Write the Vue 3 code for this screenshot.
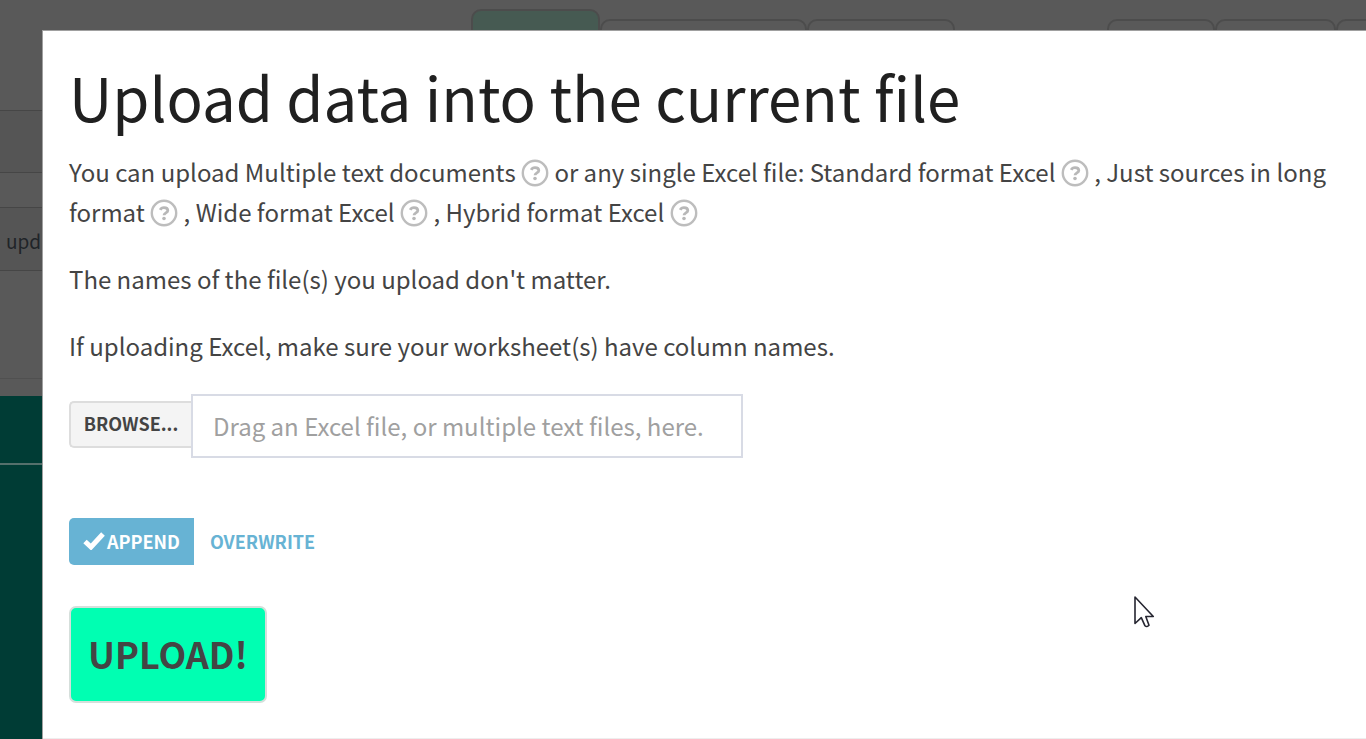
<script setup>
import { ref } from 'vue'

const mode = ref('append')
const fileName = ref('')

const intro = [
  { text: 'You can upload Multiple text documents', tail: 'or any single Excel file: ' },
  { text: 'Standard format Excel', tail: ', ' },
  { text: 'Just sources in long format', tail: ', ' },
  { text: 'Wide format Excel', tail: ', ' },
  { text: 'Hybrid format Excel', tail: '' },
]
</script>

<template>
  <div class="page">
    <div class="tabs">
      <div class="tab active"></div>
      <div class="tab wide"></div>
      <div class="tab medium"></div>
      <div class="gap"></div>
      <div class="tab narrow"></div>
      <div class="tab small"></div>
      <div class="tab rest"></div>
    </div>
    <div class="band head"></div>
    <div class="band shade"></div>
    <div class="band thin"></div>
    <div class="band row">upd</div>
    <div class="band open"></div>
    <div class="band strip"></div>
    <div class="band teal"></div>
    <div class="band teal last"></div>

    <main class="modal" role="dialog" aria-labelledby="title">
      <h1 id="title">Upload data into the current file</h1>
      <p>
        <template v-for="item in intro" :key="item.text">{{ item.text }} <svg class="help" viewBox="0 0 28 28" role="img" aria-label="Help"><circle cx="14" cy="14" r="12.2" fill="none" stroke="#bdbdbd" stroke-width="2.4" /><path d="M10.2 10.8C11 9.2 12.3 8.6 14 8.6C16.5 8.6 17.8 9.8 17.8 11.5C17.8 14 14 13.8 14 16.3" fill="none" stroke="#b8b8b8" stroke-width="2.8" /><circle cx="14" cy="19.5" r="1.8" fill="#b8b8b8" /></svg> {{ item.tail }}</template>
      </p>
      <p>The names of the file(s) you upload don't matter.</p>
      <p>If uploading Excel, make sure your worksheet(s) have column names.</p>

      <div class="picker">
        <button type="button" class="browse">BROWSE...</button>
        <input v-model="fileName" type="text" aria-label="File" placeholder="Drag an Excel file, or multiple text files, here." />
      </div>

      <div class="modes">
        <button type="button" class="mode chosen" :aria-pressed="mode === 'append'" @click="mode = 'append'">
          <svg class="check" viewBox="0 0 22 18" aria-hidden="true"><path d="M2 9.5L8 15L20 2" fill="none" stroke="currentColor" stroke-width="5" /></svg>APPEND
        </button>
        <button type="button" class="mode" :aria-pressed="mode === 'overwrite'" @click="mode = 'overwrite'">OVERWRITE</button>
      </div>

      <button type="button" class="upload">UPLOAD!</button>
      <div class="rule"></div>
    </main>

    <svg class="cursor" viewBox="0 0 22 34" aria-hidden="true">
      <path d="M2 2V28.5L8.3 22.7L12 30.8Q13.8 32.6 16 30.2L12.8 21.5H20.3Z" fill="#fff" stroke="#252530" stroke-width="1.6" stroke-linejoin="round" />
    </svg>
  </div>
</template>

<style>
body {
  margin: 0;
  background: #595959;
}
</style>

<style scoped>
* {
  box-sizing: border-box;
}
.page {
  position: relative;
  display: flex;
  flex-direction: column;
  min-height: 100vh;
  overflow: hidden;
  background: #595959;
  font-family: "Noto Sans CJK SC", "Noto Sans", sans-serif;
  color: #444;
}
.tabs {
  display: flex;
  align-items: flex-end;
  height: 40px;
  padding-left: 471px;
}
.tab {
  height: 21px;
  border: 2px solid #4c4c4c;
  border-radius: 10px 10px 0 0;
}
.tab.active {
  width: 129px;
  height: 31px;
  background: #465a52;
}
.tab.wide { width: 207px; }
.tab.medium { width: 148px; }
.gap { width: 152px; }
.tab.narrow { width: 108px; }
.tab.small { width: 121px; }
.tab.rest { flex: 1; border-right: 0; border-top-right-radius: 0; }
.band {
  border-bottom: 1px solid #464646;
}
.head { height: 71px; }
.shade { height: 62px; background: #555; }
.thin { height: 35px; }
.row {
  height: 63px;
  padding-left: 6px;
  background: #555;
  color: #202428;
  font-size: 19px;
  line-height: 66px;
}
.open { height: 108px; border-color: #505050; }
.strip { height: 17px; border: 0; }
.teal { height: 69px; border-bottom: 2px solid #55706c; background: #003c35; }
.last { flex: 1; border: 0; }
.modal {
  position: absolute;
  top: 30px;
  right: 0;
  left: 42px;
  min-height: calc(100% - 30px);
  padding: 20px 26px 0;
  border-top: 1px solid #a0a0a0;
  border-left: 1px solid #a0a0a0;
  background: #fff;
}
h1 {
  margin: 0 0 11px;
  color: #202020;
  font-size: 60px;
  font-weight: 400;
  line-height: 90px;
}
p {
  margin: 0 0 27px;
  font-size: 24px;
  line-height: 40px;
}
.help {
  width: 28px;
  height: 28px;
  vertical-align: -5px;
}
.picker {
  display: flex;
  align-items: center;
  margin-top: 28px;
}
.browse {
  width: 122px;
  height: 47px;
  margin-bottom: 4px;
  padding: 0 0 2px;
  border: 2px solid #ddd;
  border-right: 0;
  border-radius: 5px 0 0 5px;
  background: #f4f4f4;
  color: #444;
  font: 700 18px/24px "Noto Sans CJK SC", sans-serif;
}
input {
  width: 552px;
  height: 64px;
  padding: 0 20px 2px;
  border: 2px solid #d8dbe5;
  background: #fff;
  color: #444;
  font: 400 24px/36px "Noto Sans CJK SC", sans-serif;
}
input::placeholder {
  color: #a0a0a0;
}
.modes {
  display: flex;
  margin-top: 60px;
}
.mode {
  display: flex;
  align-items: center;
  height: 47px;
  padding: 0 16px 2px;
  border: 0;
  background: transparent;
  color: #67b3d4;
  font: 700 18px/24px "Noto Sans CJK SC", sans-serif;
}
.chosen {
  padding: 0 14px 2px;
  border-radius: 5px 0 0 5px;
  background: #67b3d4;
  color: #fff;
}
.check {
  width: 22px;
  height: 18px;
  margin-right: 2px;
}
.upload {
  display: block;
  height: 97px;
  margin-top: 41px;
  padding: 0 17px 4px;
  border: 2px solid #d5dfdb;
  border-radius: 7px;
  background: #00ffb2;
  color: #444;
  font: 700 36px/48px "Noto Sans CJK SC", sans-serif;
}
.rule {
  margin: 35px -26px 0;
  border-top: 1px solid #eee;
}
.cursor {
  position: absolute;
  top: 595px;
  left: 1133px;
  width: 22px;
  height: 34px;
}
</style>
